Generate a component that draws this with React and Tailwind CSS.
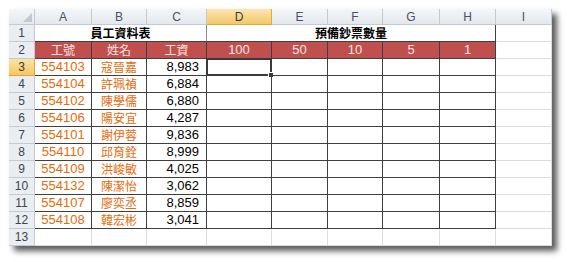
import React from 'react'

const cols = ['A', 'B', 'C', 'D', 'E', 'F', 'G', 'H', 'I']

const staff = [
  ['554103', '寇晉嘉', '8,983'],
  ['554104', '許珮禎', '6,884'],
  ['554102', '陳學儒', '6,880'],
  ['554106', '陽安宜', '4,287'],
  ['554101', '謝伊蓉', '9,836'],
  ['554110', '邱育銓', '8,999'],
  ['554109', '洪峻敏', '4,025'],
  ['554132', '陳潔怡', '3,062'],
  ['554107', '廖奕丞', '8,859'],
  ['554108', '韓宏彬', '3,041'],
]

const bills = ['100', '50', '10', '5', '1']

const cjk = "font-['Noto_Sans_CJK_TC','Noto_Sans_CJK_SC',sans-serif]"
const latin = "font-['Liberation_Sans',Arial,sans-serif]"

function RowHead({ n, active }) {
  return (
    <div
      className={`h-[17px] flex items-center justify-center border-r border-b text-[12px] ${latin} ${
        active
          ? 'bg-gradient-to-b from-[#fbe3a6] to-[#f4c85e] border-[#e0a536] text-[#3a3a3a]'
          : 'bg-[#eaedf1] border-[#c4cad3] text-[#3d4550]'
      }`}
    >
      {n}
    </div>
  )
}

export default function App() {
  return (
    <div className="w-[567px] h-[262px] bg-white pl-[9px] pt-[9px]">
      <div className="w-[543px] grid grid-cols-[26px_57px_55px_60px_65px_56px_55px_57px_56px_56px] bg-white shadow-[5px_5px_6px_rgba(0,0,0,0.65)]">
        {/* column header row */}
        <div className="h-[16px] relative bg-gradient-to-b from-[#f4f6f9] to-[#e3e8ee] border-r border-b border-[#c4cad3]">
          <div className="absolute right-[2px] bottom-[2px] w-0 h-0 border-l-[9px] border-l-transparent border-b-[9px] border-b-[#c3c8cf]" />
        </div>
        {cols.map(c => (
          <div
            key={c}
            className={`h-[16px] flex items-center justify-center border-r border-b text-[12px] ${latin} ${
              c === 'D'
                ? 'bg-gradient-to-b from-[#fbe6b0] to-[#f3c867] border-[#e2a83c] text-[#3a3a3a]'
                : 'bg-gradient-to-b from-[#f4f6f9] to-[#e3e8ee] border-[#c4cad3] text-[#4a5260]'
            }`}
          >
            {c}
          </div>
        ))}

        {/* row 1 */}
        <RowHead n={1} />
        <div className={`col-span-3 h-[17px] flex items-center justify-center border-r border-r-[#8c8c8c] border-b border-b-[#3f3f3f] text-[12px] font-bold text-black ${cjk}`}>
          員工資料表
        </div>
        <div className={`col-span-5 h-[17px] flex items-center justify-center border-r border-b border-[#3f3f3f] text-[12px] font-bold text-black ${cjk}`}>
          預備鈔票數量
        </div>
        <div className="h-[17px] border-r border-b border-[#dadcdf]" />

        {/* row 2 */}
        <RowHead n={2} />
        {['工號', '姓名', '工資'].map(t => (
          <div key={t} className={`h-[17px] flex items-center justify-center bg-[#c0504d] border-r border-b border-[#3f3f3f] text-[12px] text-[#f6e4e3] ${cjk}`}>
            {t}
          </div>
        ))}
        {bills.map(b => (
          <div key={b} className={`h-[17px] flex items-center justify-center bg-[#c0504d] border-r border-b border-[#3f3f3f] text-[13px] text-[#f6e4e3] ${latin}`}>
            {b}
          </div>
        ))}
        <div className="h-[17px] border-r border-b border-[#dadcdf]" />

        {/* data rows */}
        {staff.map(([id, name, pay], i) => (
          <React.Fragment key={id}>
            <RowHead n={i + 3} active={i === 0} />
            <div className={`h-[17px] flex items-center justify-center border-r border-b border-[#3f3f3f] text-[13px] text-[#e46c0a] ${latin}`}>
              {id}
            </div>
            <div className={`h-[17px] flex items-center justify-center border-r border-b border-[#3f3f3f] text-[12px] text-[#e46c0a] ${cjk}`}>
              {name}
            </div>
            <div className={`h-[17px] flex items-center justify-end pr-[7px] border-r border-b border-[#3f3f3f] text-[13px] text-black ${latin}`}>
              {pay}
            </div>
            {bills.map((b, j) => (
              <div key={b} className="h-[17px] relative border-r border-b border-[#3f3f3f]">
                {i === 0 && j === 0 && (
                  <div className="absolute -left-px -top-px w-[66px] h-[18px] border-2 border-[#3a3a3a]">
                    <div className="absolute -right-[4px] -bottom-[4px] w-[6px] h-[6px] bg-[#3a3a3a] border border-white" />
                  </div>
                )}
              </div>
            ))}
            <div className="h-[17px] border-r border-b border-[#dadcdf]" />
          </React.Fragment>
        ))}

        {/* row 13 */}
        <RowHead n={13} />
        {cols.map(c => (
          <div key={c} className="h-[17px] border-r border-b border-[#dadcdf]" />
        ))}
      </div>
    </div>
  )
}
